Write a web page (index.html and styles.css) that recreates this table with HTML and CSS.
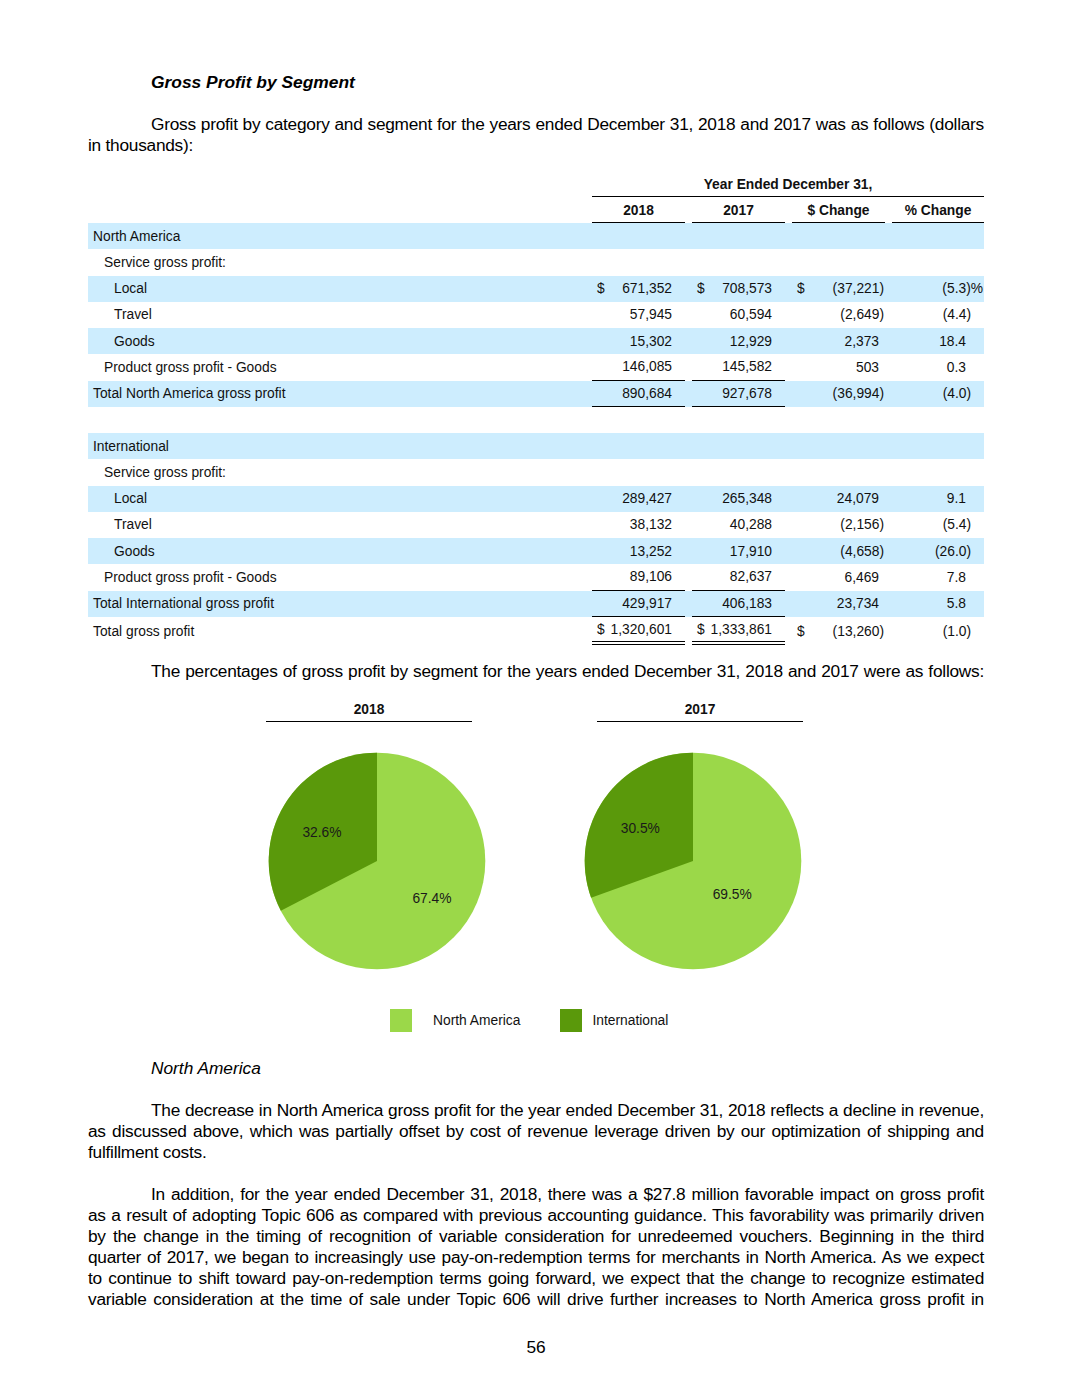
FILE: index.html
```html
<!DOCTYPE html>
<html lang="en">
<head>
<meta charset="utf-8">
<title>Gross Profit by Segment</title>
<link rel="stylesheet" href="styles.css">
</head>
<body>
<div class="page">
  <h2 class="title">Gross Profit by Segment</h2>

  <p class="para">
    <span class="ln ind">Gross profit by category and segment for the years ended December 31, 2018 and 2017 was as follows (dollars</span>
    <span class="ln last">in thousands):</span>
  </p>

  <div class="fin">
    <div class="hrow">
      <div></div>
      <div class="span4">Year Ended December 31,</div>
    </div>
    <div class="hrow">
      <div></div>
      <div class="hcell">2018</div>
      <div class="hcell">2017</div>
      <div class="hcell">$ Change</div>
      <div class="hcell end">% Change</div>
    </div>

    <div class="row band"><div class="lab">North America</div><div></div><div></div><div></div><div></div></div>
    <div class="row"><div class="lab l2">Service gross profit:</div><div></div><div></div><div></div><div></div></div>
    <div class="row band"><div class="lab l3">Local</div>
      <div class="v"><span>$</span><span>671,352</span></div>
      <div class="v"><span>$</span><span>708,573</span></div>
      <div class="v chg"><span>$</span><span>(37,221)</span></div>
      <div class="v pct pp"><span>(5.3)%</span></div></div>
    <div class="row"><div class="lab l3">Travel</div>
      <div class="v"><span>57,945</span></div>
      <div class="v"><span>60,594</span></div>
      <div class="v chg"><span>(2,649)</span></div>
      <div class="v pct"><span>(4.4)</span></div></div>
    <div class="row band"><div class="lab l3">Goods</div>
      <div class="v"><span>15,302</span></div>
      <div class="v"><span>12,929</span></div>
      <div class="v chg pos"><span>2,373</span></div>
      <div class="v pct pos"><span>18.4</span></div></div>
    <div class="row"><div class="lab l2">Product gross profit - Goods</div>
      <div class="v ul"><span>146,085</span></div>
      <div class="v ul"><span>145,582</span></div>
      <div class="v chg pos"><span>503</span></div>
      <div class="v pct pos"><span>0.3</span></div></div>
    <div class="row band"><div class="lab">Total North America gross profit</div>
      <div class="v ul"><span>890,684</span></div>
      <div class="v ul"><span>927,678</span></div>
      <div class="v chg"><span>(36,994)</span></div>
      <div class="v pct"><span>(4.0)</span></div></div>
    <div class="row"><div></div><div></div><div></div><div></div><div></div></div>

    <div class="row band"><div class="lab">International</div><div></div><div></div><div></div><div></div></div>
    <div class="row"><div class="lab l2">Service gross profit:</div><div></div><div></div><div></div><div></div></div>
    <div class="row band"><div class="lab l3">Local</div>
      <div class="v"><span>289,427</span></div>
      <div class="v"><span>265,348</span></div>
      <div class="v chg pos"><span>24,079</span></div>
      <div class="v pct pos"><span>9.1</span></div></div>
    <div class="row"><div class="lab l3">Travel</div>
      <div class="v"><span>38,132</span></div>
      <div class="v"><span>40,288</span></div>
      <div class="v chg"><span>(2,156)</span></div>
      <div class="v pct"><span>(5.4)</span></div></div>
    <div class="row band"><div class="lab l3">Goods</div>
      <div class="v"><span>13,252</span></div>
      <div class="v"><span>17,910</span></div>
      <div class="v chg"><span>(4,658)</span></div>
      <div class="v pct"><span>(26.0)</span></div></div>
    <div class="row"><div class="lab l2">Product gross profit - Goods</div>
      <div class="v ul"><span>89,106</span></div>
      <div class="v ul"><span>82,637</span></div>
      <div class="v chg pos"><span>6,469</span></div>
      <div class="v pct pos"><span>7.8</span></div></div>
    <div class="row band"><div class="lab">Total International gross profit</div>
      <div class="v ul"><span>429,917</span></div>
      <div class="v ul"><span>406,183</span></div>
      <div class="v chg pos"><span>23,734</span></div>
      <div class="v pct pos"><span>5.8</span></div></div>
    <div class="row grand"><div class="lab">Total gross profit</div>
      <div class="v dbl"><span>$</span><span>1,320,601</span></div>
      <div class="v dbl"><span>$</span><span>1,333,861</span></div>
      <div class="v chg"><span>$</span><span>(13,260)</span></div>
      <div class="v pct"><span>(1.0)</span></div></div>
  </div>

  <p class="para para2">
    <span class="ln ind last">The percentages of gross profit by segment for the years ended December 31, 2018 and 2017 were as follows:</span>
  </p>

  <div class="chart-heads">
    <div class="chart-head">2018</div>
    <div class="chart-head">2017</div>
  </div>

  <div class="pies">
    <svg class="pie" width="222" height="220" viewBox="0 0 222 220">
      <circle cx="111" cy="110" r="108.3" fill="#9bd849"/>
      <path d="M111 110 L111 1.7 A108.3 108.3 0 0 0 14.81 159.77 Z" fill="#5a990b"/>
      <text x="56" y="81" class="pl">32.6%</text>
      <text x="166" y="147.5" class="pl">67.4%</text>
    </svg>
    <svg class="pie" width="222" height="220" viewBox="0 0 222 220">
      <circle cx="111" cy="110" r="108.3" fill="#9bd849"/>
      <path d="M111 110 L111 1.7 A108.3 108.3 0 0 0 9.1 146.68 Z" fill="#5a990b"/>
      <text x="58.3" y="77.5" class="pl">30.5%</text>
      <text x="150.2" y="143" class="pl">69.5%</text>
    </svg>
  </div>

  <div class="legend">
    <span class="sw light"></span><span class="lg-text na">North America</span>
    <span class="sw dark"></span><span class="lg-text">International</span>
  </div>

  <h3 class="sub">North America</h3>

  <p class="para">
    <span class="ln ind">The decrease in North America gross profit for the year ended December 31, 2018 reflects a decline in revenue,</span>
    <span class="ln">as discussed above, which was partially offset by cost of revenue leverage driven by our optimization of shipping and</span>
    <span class="ln last">fulfillment costs.</span>
  </p>

  <p class="para">
    <span class="ln ind">In addition, for the year ended December 31, 2018, there was a $27.8 million favorable impact on gross profit</span>
    <span class="ln">as a result of adopting Topic 606 as compared with previous accounting guidance. This favorability was primarily driven</span>
    <span class="ln">by the change in the timing of recognition of variable consideration for unredeemed vouchers. Beginning in the third</span>
    <span class="ln">quarter of 2017, we began to increasingly use pay-on-redemption terms for merchants in North America. As we expect</span>
    <span class="ln">to continue to shift toward pay-on-redemption terms going forward, we expect that the change to recognize estimated</span>
    <span class="ln">variable consideration at the time of sale under Topic 606 will drive further increases to North America gross profit in</span>
  </p>

  <div class="pageno">56</div>
</div>
</body>
</html>
```

FILE: styles.css
```css
* { box-sizing: border-box; }

body {
  margin: 0;
  background: #fff;
  color: #000;
  font-family: "Liberation Sans", Arial, sans-serif;
}

.page {
  width: 984px;
  padding: 72px 0 30px 88px;
}

.title {
  margin: 0 0 0 63px;
  font-size: 17.4px;
  line-height: 21px;
  font-weight: bold;
  font-style: italic;
}

.para {
  margin: 21px 0 0;
  font-size: 17.3px;
  line-height: 21px;
  letter-spacing: -0.25px;
}

.ln {
  display: block;
  white-space: nowrap;
  text-align: justify;
  text-align-last: justify;
}

.ln.ind { padding-left: 63px; }
.ln.last { text-align-last: left; }

.para2 { margin-top: 15.5px; }
.para2 .ln { text-align-last: justify; }

/* financial table */
.fin {
  margin-top: 15px;
  width: 896px;
  font-size: 13.8px;
  color: #111;
}

.hrow {
  display: grid;
  grid-template-columns: 504px 100px 100px 100px 92px;
  height: 26px;
  font-weight: bold;
}

.span4 {
  grid-column: 2 / 6;
  display: flex;
  align-items: center;
  justify-content: center;
  padding-top: 2px;
  border-bottom: 1.5px solid #000;
}

.hcell {
  display: flex;
  align-items: center;
  justify-content: center;
  padding-top: 1px;
  margin-right: 7px;
  border-bottom: 1.5px solid #000;
}

.hcell.end { margin-right: 0; }

.row {
  display: grid;
  grid-template-columns: 504px 100px 100px 100px 92px;
  height: 26.25px;
}

.row.band { background: #cdedfe; }
.row.grand { height: 28.5px; }

.lab {
  display: flex;
  align-items: center;
  padding-left: 5px;
  white-space: nowrap;
}

.lab.l2 { padding-left: 16px; }
.lab.l3 { padding-left: 26px; }

.v {
  display: flex;
  align-items: center;
  padding: 0 13px 0 5px;
  margin-right: 7px;
  white-space: nowrap;
}

.v span:last-child { margin-left: auto; }

.v.chg { padding-right: 1px; }
.v.chg.pos { padding-right: 6px; }
.v.pct { margin-right: 0; padding-right: 13px; }
.v.pct.pos { padding-right: 18px; }
.v.pct.pp { padding-right: 1px; }

.ul { border-bottom: 1.5px solid #000; }
.dbl { border-bottom: 4px double #000; }

/* charts */
.chart-heads {
  display: flex;
  gap: 125px;
  margin: 17px 0 0 178px;
}

.chart-head {
  width: 206px;
  text-align: center;
  font-size: 13.8px;
  font-weight: bold;
  line-height: 21px;
  padding-bottom: 1.5px;
  border-bottom: 1.5px solid #000;
  color: #111;
}

.pies {
  display: flex;
  gap: 94px;
  margin: 28.5px 0 0 178px;
}

.pie { display: block; }

.pl {
  font-family: "Liberation Sans", Arial, sans-serif;
  font-size: 13.8px;
  fill: #1a1a1a;
  text-anchor: middle;
  dominant-baseline: central;
}

.legend {
  display: flex;
  align-items: center;
  margin: 38px 0 0 302px;
  height: 23px;
  font-size: 13.8px;
  color: #111;
}

.sw {
  width: 22px;
  height: 23px;
  display: block;
}

.sw.light { background: #9bd849; margin-right: 21px; }
.sw.dark { background: #5a990b; margin-right: 10px; }
.lg-text.na { margin-right: 40px; }

.sub {
  margin: 26.5px 0 0 63px;
  font-size: 17.3px;
  line-height: 21px;
  font-weight: normal;
  font-style: italic;
}

.pageno {
  margin-top: 27px;
  width: 896px;
  text-align: center;
  font-size: 17.3px;
  line-height: 21px;
}
```
